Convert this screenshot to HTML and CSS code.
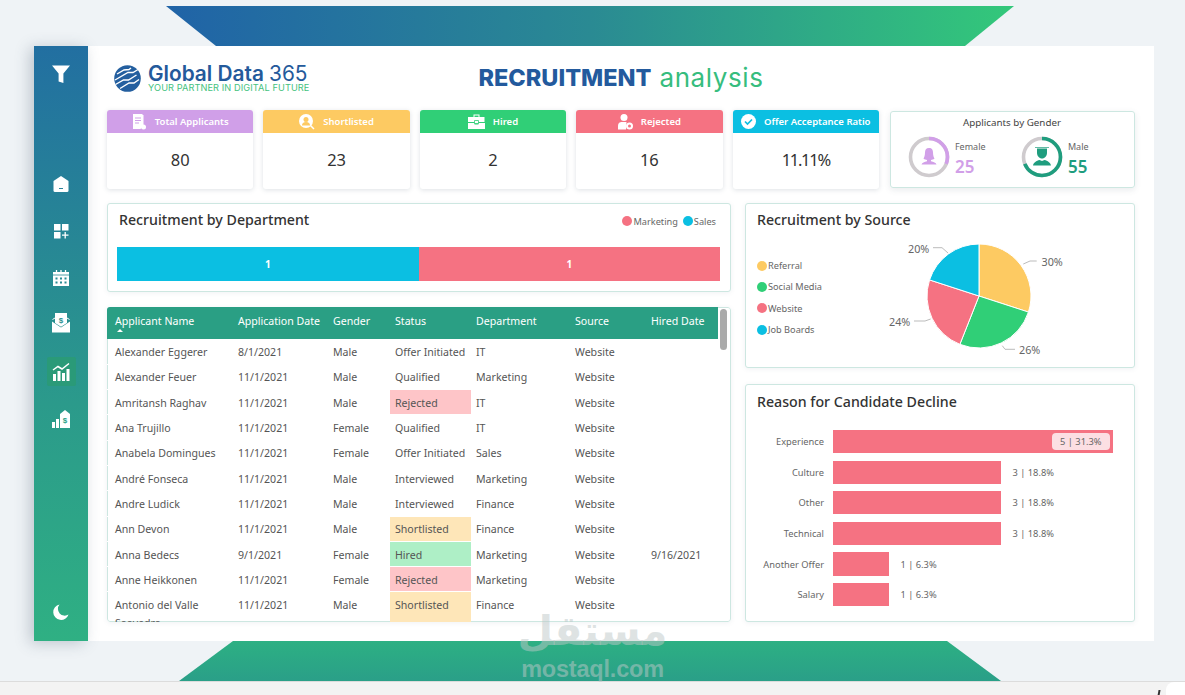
FILE: index.html
```html
<!DOCTYPE html>
<html lang="en">
<head>
<meta charset="utf-8">
<title>Recruitment analysis</title>
<link rel="stylesheet" href="styles.css">
</head>
<body>
<div class="page">
  <div class="ribbon ribbon-top"></div>
  <div class="board">
    <nav class="sidebar">
      <span class="nav-item nav-filter"><svg width="20" height="20" viewBox="0 0 20 20"><path class="w" d="M1 1.500h18l-6.600 8v9.500l-4.800-1.600V9.500z"/></svg></span>
      <span class="nav-item"><svg width="18" height="18" viewBox="0 0 18 18"><path class="w" d="M9 1l7.500 5v9.500a1.500 1.500 0 0 1-1.500 1.500H3a1.500 1.500 0 0 1-1.500-1.500V6z"/><path d="M7 13.500h4" stroke="#2a8198" stroke-width="1"/></svg></span>
      <span class="nav-item"><svg width="18" height="18" viewBox="0 0 18 18"><path class="w" d="M2 2h6.500v6.500H2zM10 2h6.500v6.500H10zM2 10h6.500v6.500H2z"/><path d="M13.200 10v6.500M10 13.200h6.500" stroke="#fff" stroke-width="1.300"/></svg></span>
      <span class="nav-item"><svg width="18" height="18" viewBox="0 0 18 18"><path class="w" d="M1 3h16v14H1z"/><path d="M4.500 1v4M9 1v4M13.500 1v4" stroke="#fff" stroke-width="1.300"/><path d="M1 6h16" stroke="#2a8b94" stroke-width=".8"/><path d="M3.500 8.500h2v2h-2zM8 8.500h2v2H8zM12.500 8.500h2v2h-2zM3.500 12.500h2v2h-2zM8 12.500h2v2H8zM12.500 12.500h2v2h-2z" fill="#2a8b94"/></svg></span>
      <span class="nav-item nav-mail"><svg width="20" height="20" viewBox="0 0 20 20"><path class="w" d="M4 0h12v10l-6 3.800L4 10z"/><text x="10" y="9.500" class="dollar">$</text><path d="M1.500 6.500L4 5M18.500 6.500L16 5" stroke="#fff" stroke-width="1"/><path class="w" d="M1 8.500l9 6 9-6v11H1z"/></svg></span>
      <span class="nav-item nav-active"><svg width="19" height="19" viewBox="0 0 19 19"><path d="M1 8l5-3.500 4 2.500 7-5.500" fill="none" stroke="#fff" stroke-width="1.500"/><path class="w" d="M1 12h3v7H1zM5.500 9h3v10h-3zM10 11h3v8h-3zM14.500 7h3v12h-3z"/></svg></span>
      <span class="nav-item"><svg width="20" height="20" viewBox="0 0 20 20"><path class="w" d="M1 13h3v6H1zM5 10h3v9H5zM9 5l5-4 5 4v14H9z"/><text x="14" y="14" class="dollar-b">$</text></svg></span>
      <span class="nav-item nav-moon"><svg width="18" height="18" viewBox="0 0 18 18"><path class="w" d="M7.500 1.500a7.800 7.800 0 1 0 9 10 6.800 6.800 0 0 1-9-10z"/></svg></span>
    </nav>

    <main class="content">
      <header class="top">
        <div class="brand">
          <svg class="logo" width="27" height="27" viewBox="0 0 27 27">
            <circle cx="13.500" cy="13.500" r="13.300" fill="#245f9f"/>
            <g stroke="#fff" stroke-width="1.400" fill="none">
              <path d="M1 15l13-7.500h5l5-3"/><path d="M1.500 19.500l8-4.500h5l8-5"/><path d="M6 23.500l9-5.500h5l5-3.500"/><path d="M3 9l7-4 5-.5 2-1.500"/>
            </g>
          </svg>
          <div>
            <div class="brand-name">Global Data <span class="brand-num">365</span></div>
            <div class="brand-tag">YOUR PARTNER IN DIGITAL FUTURE</div>
          </div>
        </div>
        <h1 class="title"><span class="title-bold">RECRUITMENT</span> <span class="title-light">analysis</span></h1>
      </header>

      <section class="kpis">
        <article class="kpi">
          <div class="kpi-head purple"><svg width="15" height="16" viewBox="0 0 15 16"><path class="w" d="M1 0h9l1.500 1.500V11l-3 4H1z"/><path d="M3 4h6M3 6.500h6M3 9h4" stroke="#d09fe8" stroke-width="1"/><circle class="w" cx="11.500" cy="13" r="2.500"/></svg>Total Applicants</div>
          <div class="kpi-val">80</div>
        </article>
        <article class="kpi">
          <div class="kpi-head yellow"><svg width="16" height="16" viewBox="0 0 16 16"><circle class="w" cx="7" cy="7" r="7"/><circle cx="7" cy="5.500" r="2.500" fill="#fdca62"/><path d="M3 11.500a4 3.500 0 0 1 8 0z" fill="#fdca62"/><path d="M11.500 11.500l3.500 3.500" stroke="#fff" stroke-width="1.500"/></svg>Shortlisted</div>
          <div class="kpi-val">23</div>
        </article>
        <article class="kpi">
          <div class="kpi-head green"><svg width="17" height="15" viewBox="0 0 17 15"><path class="w" d="M5.500 3V.5h6V3h5v5H0V3zM6.500 3h4V1.500h-4zM0 9h6.500v1.500h4V9H17v6H0z"/><path d="M6.500 6.500h4v3h-4z" fill="#fff" stroke="#30cf77" stroke-width=".8"/></svg>Hired</div>
          <div class="kpi-val">2</div>
        </article>
        <article class="kpi">
          <div class="kpi-head red"><svg width="15" height="16" viewBox="0 0 15 16"><circle class="w" cx="6" cy="3.500" r="3.500"/><path class="w" d="M0 15.500v-4c0-2.500 2-3.500 3.500-3.500h5L8 15.500z"/><circle cx="11.500" cy="12" r="3.500" class="w"/><circle cx="11.500" cy="12" r="1.500" fill="#f57282"/></svg>Rejected</div>
          <div class="kpi-val">16</div>
        </article>
        <article class="kpi">
          <div class="kpi-head blue"><svg width="15" height="15" viewBox="0 0 15 15"><circle class="w" cx="7.500" cy="7.500" r="7.500"/><path d="M4 7.500l2.500 2.500 4.500-4.500" fill="none" stroke="#0bbfe2" stroke-width="1.700"/></svg>Offer Acceptance Ratio</div>
          <div class="kpi-val kpi-tight">11.11%</div>
        </article>
        <article class="gender">
          <div class="gender-title">Applicants by Gender</div>
          <div class="gender-row">
            <div class="gender-item">
              <svg width="42" height="42" viewBox="0 0 42 42">
                <circle cx="21" cy="21" r="18.500" class="ring"/>
                <circle cx="21" cy="21" r="18.500" class="ring-f" pathLength="100" stroke-dasharray="31 69" transform="rotate(-90 21 21)"/>
                <path d="M21 12c3 0 4 2 4 4.500 0 3 .8 5 1.500 6-1 1-2.500 1.300-3.500 1.500v1.300c2.500.6 5 1.500 5.500 3.200h-15c.5-1.700 3-2.600 5.500-3.200V24c-1-.2-2.500-.5-3.500-1.500.7-1 1.500-3 1.500-6C17 14 18 12 21 12z" fill="#d19fe8"/>
              </svg>
              <div><div class="gender-label">Female</div><div class="gender-num num-f">25</div></div>
            </div>
            <div class="gender-item">
              <svg width="42" height="42" viewBox="0 0 42 42">
                <circle cx="21" cy="21" r="18.500" class="ring"/>
                <circle cx="21" cy="21" r="18.500" class="ring-m" pathLength="100" stroke-dasharray="69 31" transform="rotate(-90 21 21)"/>
                <path d="M14 11.500h14" stroke="#1f9d7e" stroke-width=".7"/>
                <path d="M16 12.500h10v4.500c0 2.800-2.200 5.500-5 5.500s-5-2.700-5-5.500z" fill="#1f9d7e"/>
                <path d="M12 29.500c.4-3 3.500-4.700 6.500-5.500l2.500 1 2.500-1c3 .8 6.100 2.500 6.500 5.500z" fill="#1f9d7e"/>
              </svg>
              <div><div class="gender-label">Male</div><div class="gender-num num-m">55</div></div>
            </div>
          </div>
        </article>
      </section>

      <section class="grid">
        <div class="col-left">
          <article class="card dept">
            <div class="dept-head">
              <h2 class="card-title">Recruitment by Department</h2>
              <div class="dept-legend">
                <span class="lg"><i class="dot d-red"></i>Marketing</span>
                <span class="lg"><i class="dot d-blue"></i>Sales</span>
              </div>
            </div>
            <div class="stack"><div class="seg d-blue">1</div><div class="seg d-red">1</div></div>
          </article>

          <article class="card table-card">
            <table class="tbl">
              <colgroup><col class="c1"><col class="c2"><col class="c3"><col class="c4"><col class="c5"><col class="c6"><col class="c7"></colgroup>
              <thead>
                <tr><th class="first">Applicant Name<i class="sort"></i></th><th>Application Date</th><th>Gender</th><th>Status</th><th>Department</th><th>Source</th><th>Hired Date</th></tr>
              </thead>
              <tbody>
                <tr><td class="first">Alexander Eggerer</td><td>8/1/2021</td><td>Male</td><td>Offer Initiated</td><td>IT</td><td>Website</td><td></td></tr>
                <tr><td class="first">Alexander Feuer</td><td>11/1/2021</td><td>Male</td><td>Qualified</td><td>Marketing</td><td>Website</td><td></td></tr>
                <tr><td class="first">Amritansh Raghav</td><td>11/1/2021</td><td>Male</td><td class="s-rej">Rejected</td><td>IT</td><td>Website</td><td></td></tr>
                <tr><td class="first">Ana Trujillo</td><td>11/1/2021</td><td>Female</td><td>Qualified</td><td>IT</td><td>Website</td><td></td></tr>
                <tr><td class="first">Anabela Domingues</td><td>11/1/2021</td><td>Female</td><td>Offer Initiated</td><td>Sales</td><td>Website</td><td></td></tr>
                <tr><td class="first">André Fonseca</td><td>11/1/2021</td><td>Male</td><td>Interviewed</td><td>Marketing</td><td>Website</td><td></td></tr>
                <tr><td class="first">Andre Ludick</td><td>11/1/2021</td><td>Male</td><td>Interviewed</td><td>Finance</td><td>Website</td><td></td></tr>
                <tr><td class="first">Ann Devon</td><td>11/1/2021</td><td>Male</td><td class="s-sho">Shortlisted</td><td>Finance</td><td>Website</td><td></td></tr>
                <tr><td class="first">Anna Bedecs</td><td>9/1/2021</td><td>Female</td><td class="s-hir">Hired</td><td>Marketing</td><td>Website</td><td>9/16/2021</td></tr>
                <tr><td class="first">Anne Heikkonen</td><td>11/1/2021</td><td>Female</td><td class="s-rej">Rejected</td><td>Marketing</td><td>Website</td><td></td></tr>
                <tr class="last"><td class="first">Antonio del Valle Saavedra</td><td>11/1/2021</td><td>Male</td><td class="s-sho">Shortlisted</td><td>Finance</td><td>Website</td><td></td></tr>
              </tbody>
            </table>
            <div class="scroll-thumb"></div>
          </article>
        </div>

        <div class="col-right">
          <article class="card source">
            <h2 class="card-title">Recruitment by Source</h2>
            <div class="source-body">
              <ul class="src-legend">
                <li class="lg"><i class="dot d-yellow"></i>Referral</li>
                <li class="lg"><i class="dot d-green"></i>Social Media</li>
                <li class="lg"><i class="dot d-red"></i>Website</li>
                <li class="lg"><i class="dot d-blue"></i>Job Boards</li>
              </ul>
              <svg class="pie" width="185" height="125" viewBox="0 0 185 125">
                <g stroke="#fff" stroke-width="1">
                  <path d="M94 58V6A52 52 0 0 1 143.450 74.070z" fill="#fdca62"/>
                  <path d="M94 58L143.450 74.070A52 52 0 0 1 74.860 106.350z" fill="#30cf77"/>
                  <path d="M94 58L74.860 106.350A52 52 0 0 1 44.550 41.930z" fill="#f57282"/>
                  <path d="M94 58L44.550 41.930A52 52 0 0 1 94 6z" fill="#0bbfe2"/>
                </g>
                <g fill="none" stroke="#aaa" stroke-width=".8">
                  <path d="M138.300 26L145 23h6.700"/>
                  <path d="M117.300 107.700l2.700 3.600h10"/>
                  <path d="M29 83h11l5.700-2"/>
                  <path d="M48 9.700h9l6 5.300"/>
                </g>
                <g class="pie-txt">
                  <text x="156.500" y="28">30%</text>
                  <text x="134" y="116">26%</text>
                  <text x="4" y="88">24%</text>
                  <text x="23" y="15">20%</text>
                </g>
              </svg>
            </div>
          </article>

          <article class="card decline">
            <h2 class="card-title">Reason for Candidate Decline</h2>
            <div class="bars">
              <div class="bar-row"><span class="bar-lab">Experience</span><div class="bar bar-in" style="width:280px"><span class="pill">5 | 31.3%</span></div></div>
              <div class="bar-row"><span class="bar-lab">Culture</span><div class="bar" style="width:168px"></div><span class="bar-val">3 | 18.8%</span></div>
              <div class="bar-row"><span class="bar-lab">Other</span><div class="bar" style="width:168px"></div><span class="bar-val">3 | 18.8%</span></div>
              <div class="bar-row"><span class="bar-lab">Technical</span><div class="bar" style="width:168px"></div><span class="bar-val">3 | 18.8%</span></div>
              <div class="bar-row"><span class="bar-lab">Another Offer</span><div class="bar" style="width:56px"></div><span class="bar-val">1 | 6.3%</span></div>
              <div class="bar-row"><span class="bar-lab">Salary</span><div class="bar" style="width:56px"></div><span class="bar-val">1 | 6.3%</span></div>
            </div>
          </article>
        </div>
      </section>
    </main>
  </div>
  <div class="ribbon ribbon-bottom"></div>
  <footer class="strip"><i class="strip-mark"></i><i class="strip-corner"></i></footer>
  <div class="watermark"><div class="wm-ar" lang="ar" dir="rtl">مستقل</div><div class="wm-en">mostaql.com</div></div>
</div>
</body>
</html>
```

FILE: styles.css
```css
* { box-sizing: border-box; }
html, body { margin: 0; padding: 0; }
body { background: #eff3f6; font-family: "Noto Sans", "Open Sans", sans-serif; color: #555; overflow: hidden; }
.page { position: relative; width: 1185px; height: 695px; padding-top: 6px; display: flex; flex-direction: column; }

.ribbon { height: 40px; flex: none; }
.ribbon-top { margin-left: 166px; width: 848px; background: linear-gradient(90deg, #2063a7 0%, #2a8a93 50%, #33c87a 100%); clip-path: polygon(0 0, 100% 0, 799px 100%, 50px 100%); }
.ribbon-bottom { margin-left: 179px; width: 822px; background: linear-gradient(180deg, #2db083 0%, #2a9f88 100%); clip-path: polygon(54px 0, 768px 0, 100% 100%, 0 100%); }

.board { display: flex; margin-left: 34px; width: 1120px; height: 595px; flex: none; }

.sidebar { width: 54px; flex: none; display: flex; flex-direction: column; align-items: center; padding: 14px 0 15px; background: linear-gradient(180deg, #226fa1 0%, #2b9a8b 60%, #2fb083 100%); box-shadow: -4px 2px 14px rgba(60, 80, 100, .28); position: relative; z-index: 1; }
.nav-item { width: 29px; height: 28px; margin-bottom: 19px; display: flex; align-items: center; justify-content: center; flex: none; border-radius: 2px; }
.nav-filter { margin-bottom: 82px; }
.nav-mail { align-items: flex-start; padding-top: 2px; }
.nav-active { background: #2a9a78; height: 29px; margin-top: -1px; margin-bottom: 19px; }
.nav-moon { margin-top: auto; margin-bottom: 0; }
.w { fill: #fff; }
.dollar { font: 700 8px "Liberation Sans", sans-serif; fill: #2a9090; text-anchor: middle; }
.dollar-b { font: 700 8px "Liberation Sans", sans-serif; fill: #2ba088; text-anchor: middle; }

.content { flex: 1; background: #fff; padding: 0 19px; display: flex; flex-direction: column; min-width: 0; }

.top { height: 64px; flex: none; position: relative; display: flex; align-items: center; justify-content: center; }
.brand { position: absolute; left: 7px; top: 18px; display: flex; gap: 7px; align-items: flex-start; }
.logo { margin-top: 1px; }
.brand-name { font: 600 20.800px/19px "Inter", sans-serif; color: #245a9b; white-space: nowrap; }
.brand-num { font-weight: 400; }
.brand-tag { font: 400 9.200px/10px "Inter", sans-serif; color: #45c27e; white-space: nowrap; letter-spacing: .01em; }
.title { margin: -1px 0 0; font: 400 24px/36px "Inter", sans-serif; white-space: nowrap; display: flex; gap: 8px; }
.title-bold { font-weight: 800; font-size: 23.500px; color: #235a9d; }
.title-light { font-weight: 400; font-size: 26px; color: #36bd7e; letter-spacing: .6px; }

.kpis { height: 79px; flex: none; display: flex; gap: 10px; }
.kpi { width: 146.400px; flex: none; background: #fff; border-radius: 3px; box-shadow: 0 1px 5px rgba(70, 90, 110, .18); overflow: hidden; display: flex; flex-direction: column; }
.kpi-head { height: 23px; flex: none; display: flex; align-items: center; justify-content: center; gap: 8px; color: #fff; font-size: 9.500px; font-weight: 600; white-space: nowrap; }
.purple { background: #d09fe8; }
.yellow { background: #fdca62; }
.green { background: #30cf77; }
.red { background: #f57282; }
.blue { background: #0bbfe2; }
.kpi-val { flex: 1; display: flex; align-items: center; justify-content: center; font-size: 16.500px; color: #333; padding-bottom: 4px; }
.kpi-tight { letter-spacing: -1.300px; }

.gender { flex: 1; margin: 1px 0 1px 1px; border: 1px solid #cde7e1; border-radius: 3px; box-shadow: 0 2px 6px rgba(70, 90, 110, .12); padding: 4px 0 0 17px; }
.gender-title { font-size: 9.800px; line-height: 13px; color: #444; text-align: center; padding-right: 18px; }
.gender-row { display: flex; gap: 33px; margin-top: 7px; }
.gender-item { width: 80px; display: flex; gap: 5px; align-items: flex-start; }
.ring { fill: none; stroke: #cfcbce; stroke-width: 3.600; }
.ring-f { fill: none; stroke: #d19fe8; stroke-width: 3.600; }
.ring-m { fill: none; stroke: #1f9d7e; stroke-width: 3.600; }
.gender-label { font-size: 9px; line-height: 12px; color: #666; margin-top: 5px; }
.gender-num { font-size: 17px; font-weight: 600; line-height: 24px; margin-top: 2px; }
.num-f { color: #d19fe8; }
.num-m { color: #1f9d7e; }

.grid { margin-top: 14px; flex: none; display: flex; gap: 14px; height: 419px; }
.col-left { width: 624px; flex: none; display: flex; flex-direction: column; gap: 15px; }
.col-right { flex: 1; display: flex; flex-direction: column; gap: 16px; min-width: 0; }
.card { background: #fff; border: 1px solid #cde7e1; border-radius: 3px; box-shadow: 0 1px 5px rgba(70, 90, 110, .08); position: relative; }
.card-title { margin: 0; font-size: 14.200px; line-height: 20px; font-weight: 500; color: #333; white-space: nowrap; }

.dept { height: 89px; padding: 6px 10px 0 9px; flex: none; }
.dept-head { display: flex; justify-content: space-between; align-items: center; padding: 0 4px 0 2px; height: 20px; }
.dept-legend { display: flex; gap: 5px; padding-top: 2px; }
.lg { display: flex; align-items: center; gap: 1px; font-size: 9.200px; color: #666; white-space: nowrap; }
.dot { width: 10px; height: 10px; border-radius: 50%; flex: none; display: block; }
.d-red { background: #f57282; }
.d-blue { background: #0bbfe2; }
.d-yellow { background: #fdca62; }
.d-green { background: #30cf77; }
.stack { display: flex; height: 34px; margin-top: 17px; }
.seg { flex: 1; display: flex; align-items: center; justify-content: center; color: #fff; font-size: 10px; font-weight: 700; }

.table-card { height: 315px; flex: none; overflow: hidden; border: 0; }
.table-card::after { content: ""; position: absolute; inset: 0; border: 1px solid #cde7e1; border-radius: 3px; pointer-events: none; }
.tbl { width: 611px; border-collapse: collapse; table-layout: fixed; font-size: 10.600px; color: #555; position: relative; z-index: 1; }
.c1 { width: 126px; }
.c2 { width: 95px; }
.c3 { width: 62px; }
.c4 { width: 81px; }
.c5 { width: 99px; }
.c6 { width: 76px; }
.c7 { width: 72px; }
.tbl th { height: 32px; background: #2a9f84; color: #fff; font-weight: 400; text-align: left; padding: 0 0 4px 5px; white-space: nowrap; position: relative; }
.tbl td { height: 25.300px; padding: 1px 0 0 5px; border-bottom: 1px solid #fff; line-height: 18px; vertical-align: middle; white-space: nowrap; }
.tbl .first { padding-left: 8px; }
.tbl .last td { vertical-align: top; padding-top: 4px; }
.tbl .last .first { white-space: normal; }
.sort { position: absolute; left: 10px; bottom: 7px; border-left: 3.500px solid transparent; border-right: 3.500px solid transparent; border-bottom: 3.500px solid #fff; }
.s-rej { background: #fec5c8; }
.s-sho { background: #fee6b8; }
.s-hir { background: #aeefc6; }
.scroll-thumb { position: absolute; right: 4px; top: 2px; width: 7px; height: 41px; background: #aaa; border-radius: 4px; z-index: 2; }

.source { height: 165px; flex: none; padding: 6px 11px 0; }
.source-body { display: flex; justify-content: space-between; }
.src-legend { list-style: none; margin: 29px 0 0; padding: 0; display: flex; flex-direction: column; gap: 8.400px; width: 100px; }
.src-legend .lg { height: 13px; }
.pie { display: block; margin: 8px 53px 0 0; }
.pie-txt { font-size: 10.800px; fill: #666; }

.decline { flex: 1; padding: 7px 11px 0; }
.bars { margin-top: 18px; display: flex; flex-direction: column; gap: 7.300px; margin-left: -11px; }
.bar-row { display: flex; align-items: center; height: 23.300px; }
.bar-lab { width: 78px; flex: none; text-align: right; font-size: 9.300px; color: #666; margin-right: 9px; white-space: nowrap; }
.bar { height: 23.300px; background: #f57282; flex: none; }
.bar-in { display: flex; align-items: center; justify-content: flex-end; padding-right: 3.500px; }
.pill { background: #fcdfe3; border-radius: 4px; height: 17px; padding: 0 8px; font-size: 9.300px; line-height: 17px; color: #666; }
.bar-val { margin-left: 11.500px; font-size: 9.300px; color: #666; white-space: nowrap; }

.strip { height: 14px; flex: none; background: #f3f3f3; border-top: 1px solid #dcdcdc; position: relative; overflow: hidden; }
.strip-mark { position: absolute; left: 1158px; top: 8px; width: 2px; height: 6px; background: #333; transform: skewX(-10deg); }
.strip-corner { position: absolute; left: 1166px; top: 0; width: 40px; height: 30px; background: #fff; border-radius: 8px 0 0 0; }

.watermark { position: absolute; left: 505px; top: 612px; width: 175px; text-align: center; color: rgba(190, 200, 200, .5); pointer-events: none; }
.wm-ar { font: 700 41px/38px "DejaVu Sans", sans-serif; }
.wm-en { font: 700 23.500px/26px "Liberation Sans", sans-serif; letter-spacing: -.2px; margin-top: 6px; }
```
